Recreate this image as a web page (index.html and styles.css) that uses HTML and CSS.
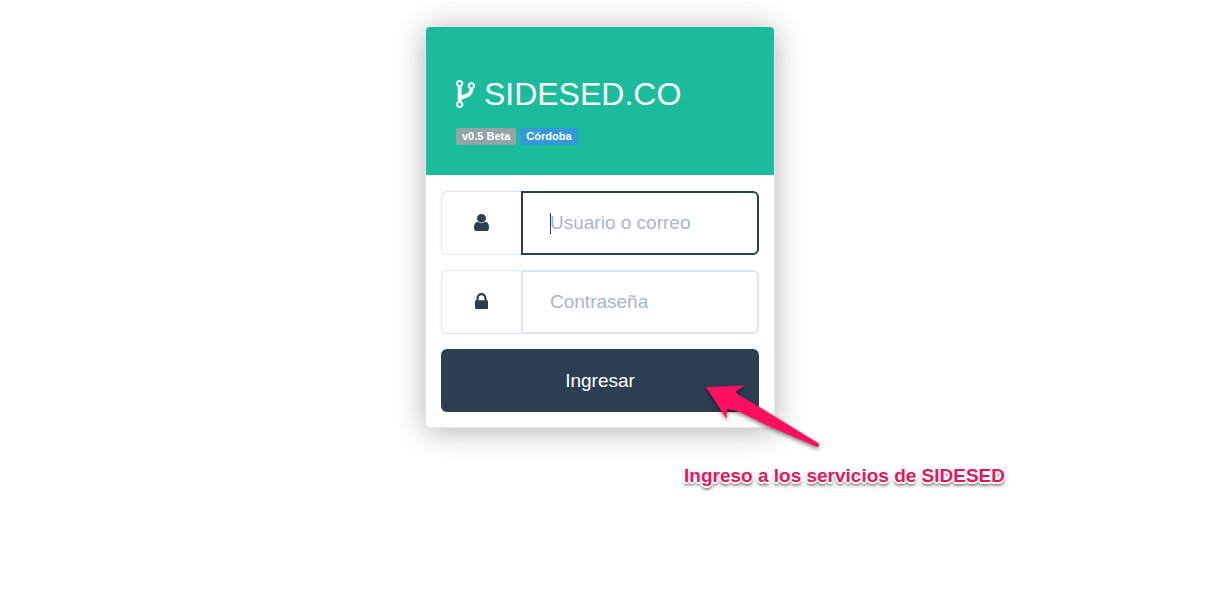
FILE: index.html
```html
<!DOCTYPE html>
<html lang="es">
<head>
<meta charset="utf-8">
<meta name="viewport" content="width=device-width, initial-scale=1">
<title>SIDESED.CO</title>
<link rel="stylesheet" href="styles.css">
</head>
<body>
<main class="page">
  <div class="login">
    <section class="card">
      <header class="card-header">
        <h1 class="brand"><svg class="icon-fork" viewBox="384 128 1024 1536" aria-hidden="true"><path d="M672 1472q0-40-28-68t-68-28-68 28-28 68 28 68 68 28 68-28 28-68zm0-1152q0-40-28-68t-68-28-68 28-28 68 28 68 68 28 68-28 28-68zm640 128q0-40-28-68t-68-28-68 28-28 68 28 68 68 28 68-28 28-68zm96 0q0 52-26 96.500t-70 69.500q-2 287-226 414-67 38-203 81-128 40-169.500 71t-41.500 100v26q44 25 70 69.500t26 96.500q0 80-56 136t-136 56-136-56-56-136q0-52 26-96.500t70-69.500v-820q-44-25-70-69.500t-26-96.500q0-80 56-136t136-56 136 56 56 136q0 52-26 96.500t-70 69.500v497q54-26 154-57 55-17 87.500-29.500t70.500-31 59-39.500 40.500-51 28-69.500 8.500-91.500q-44-25-70-69.500t-26-96.500q0-80 56-136t136-56 136 56 56 136z"/></svg> SIDESED.CO</h1>
        <div class="labels">
          <span class="label">v0.5 Beta</span>
          <span class="label label-info">Córdoba</span>
        </div>
      </header>
      <form class="form">
        <div class="field">
          <label class="addon" for="user" aria-label="Usuario o correo"><svg class="icon-user" viewBox="256 128 1280 1536" preserveAspectRatio="none" aria-hidden="true"><path d="M1536 1399q0 109-62.500 187t-150.500 78h-854q-88 0-150.500-78t-62.500-187q0-85 8.500-160.500t31.500-152 58.500-131 94-89 134.500-34.500q131 128 313 128t313-128q76 0 134.500 34.500t94 89 58.500 131 31.500 152 8.500 160.500zm-256-887q0 159-112.500 271.500t-271.500 112.500-271.500-112.500-112.500-271.500 112.500-271.500 271.500-112.500 271.500 112.500 112.500 271.500z"/></svg></label>
          <input class="control control-active" id="user" type="text" placeholder="Usuario o correo">
        </div>
        <div class="field">
          <label class="addon" for="password" aria-label="Contraseña"><svg class="icon-lock" viewBox="320 128 1152 1408" aria-hidden="true"><path d="M640 768h512v-192q0-106-75-181t-181-75-181 75-75 181v192zm832 96v576q0 40-28 68t-68 28h-960q-40 0-68-28t-28-68v-576q0-40 28-68t68-28h32v-192q0-184 132-316t316-132 316 132 132 316v192h32q40 0 68 28t28 68z"/></svg></label>
          <input class="control" id="password" type="password" placeholder="Contraseña">
        </div>
        <button class="submit" type="submit">Ingresar</button>
      </form>
    </section>
    <svg class="arrow" viewBox="0 0 120 70" aria-hidden="true"><path d="M2 7L40 5.500L31.500 12Q34 15 38 17L57 28L114 63Q116.500 66 113 67L62 45L38 33Q31 30 23 29L22.500 39Z"/></svg>
    <p class="callout">Ingreso a los servicios de SIDESED</p>
  </div>
</main>
</body>
</html>
```
FILE: styles.css
```css
* {
  box-sizing: border-box;
}

body {
  margin: 0;
  background: #fff;
  color: #2c3e50;
  font-family: "Liberation Sans", Arial, sans-serif;
  font-size: 19px;
}

.page {
  display: flex;
  align-items: flex-start;
  justify-content: center;
  min-height: 100vh;
  padding: 26px 22px 26px 0;
}

.login {
  position: relative;
  width: 100%;
  max-width: 350px;
}

.card {
  border: 1px solid #e6e8e8;
  border-radius: 5px;
  background: #fff;
  box-shadow: 0 3px 30px rgba(0, 0, 0, 0.3);
}

.card-header {
  padding: 48px 30px 30px;
  border-radius: 4px 4px 0 0;
  background: #1abc9c;
  color: #fff;
}

.brand {
  margin: 0;
  font-size: 32px;
  font-weight: 400;
  line-height: 38px;
}

.icon-fork {
  width: 19px;
  height: 28px;
  fill: currentColor;
  stroke: currentColor;
  stroke-width: 20px;
  vertical-align: -3px;
}

.labels {
  display: flex;
  gap: 4px;
  margin-top: 15px;
}

.label {
  padding: 0 6px;
  border-radius: 2px;
  background: #95a5a6;
  font-size: 11px;
  font-weight: 700;
  line-height: 17px;
}

.label-info {
  background: #3498db;
}

.form {
  display: grid;
  grid-template-columns: minmax(0, 1fr);
  gap: 15px;
  padding: 16px 15px 15px;
}

.field {
  display: flex;
  height: 64px;
}

.addon {
  display: flex;
  flex: 0 0 80px;
  align-items: center;
  justify-content: center;
  padding-bottom: 2px;
  border: 1px solid #dce4ec;
  border-right: 0;
  border-radius: 6px 0 0 6px;
}

.addon svg {
  fill: #2c3e50;
}

.icon-user {
  width: 15px;
  height: 17px;
}

.icon-lock {
  width: 13px;
  height: 16px;
}

.control {
  flex: 1;
  min-width: 0;
  padding: 0 27px;
  border: 2px solid #dce4ec;
  border-radius: 0 6px 6px 0;
  outline: 0;
  background: #fff;
  color: #2c3e50;
  font: inherit;
}

.control::placeholder {
  color: #acb6c0;
  opacity: 1;
}

.control:focus,
.control-active {
  border-color: #2c3e50;
}

/* Insertion bar at the start of the active field */
.control-active {
  background: linear-gradient(#2c3e50, #2c3e50) 27px center / 1px 21px no-repeat #fff;
}

.submit {
  height: 63px;
  padding: 0 27px;
  border: 0;
  border-radius: 6px;
  background: #2c3e50;
  color: #fff;
  font: inherit;
}

/* Annotation laid over the card */
.arrow {
  position: absolute;
  top: 354px;
  left: 279px;
  width: 120px;
  height: 70px;
  overflow: visible;
  fill: #ff0f5f;
  filter: drop-shadow(0 2px 2px rgba(0, 0, 0, 0.5));
  pointer-events: none;
}

.callout {
  position: absolute;
  top: 438px;
  left: 259px;
  margin: 0;
  color: #e8145c;
  font-weight: 700;
  line-height: 24px;
  white-space: nowrap;
  text-shadow:
    -2px 0 #fff, 2px 0 #fff, 0 -2px #fff, 0 2px #fff,
    -1px -1px #fff, 1px -1px #fff, -1px 1px #fff, 1px 1px #fff,
    0 3px 3px rgba(0, 0, 0, 0.6), 0 3px 5px rgba(0, 0, 0, 0.4);
}
```
